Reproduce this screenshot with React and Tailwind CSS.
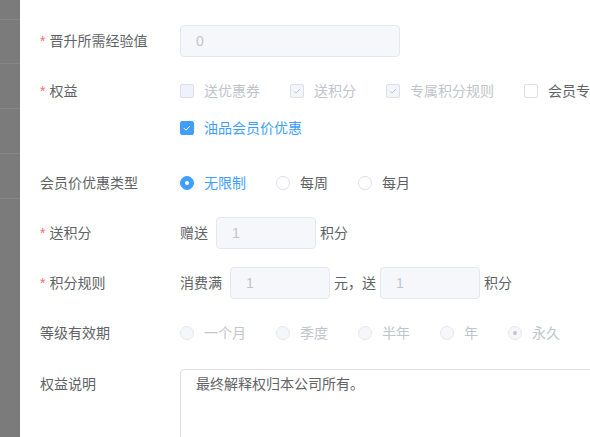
import React from "react";

const Req = () => <span className="text-[#f56c6c] mr-[4px]">*</span>;

function Label({ required, children }) {
  return (
    <div className="w-[140px] shrink-0 h-8 flex items-center text-[#606266]">
      {required && <Req />}
      {children}
    </div>
  );
}

function CheckMark({ color }) {
  return (
    <svg width="14" height="14" viewBox="0 0 14 14" className="block">
      <polyline points="4,7.2 6,9.2 10,5" fill="none" stroke={color} strokeWidth="1" />
    </svg>
  );
}

function Checkbox({ label, checked, disabled, last }) {
  let box = "bg-white border-[#dcdfe6]";
  let text = "text-[#606266]";
  if (disabled) {
    box = checked ? "bg-[#f2f6fc] border-[#dcdfe6]" : "bg-[#edf2fc] border-[#dcdfe6]";
    text = "text-[#c0c4cc]";
  } else if (checked) {
    box = "bg-[#409eff] border-[#409eff]";
    text = "text-[#409eff]";
  }
  return (
    <div className={`flex items-center whitespace-nowrap ${last ? "" : "mr-[30px]"}`}>
      <span className={`w-[14px] h-[14px] border rounded-[2px] box-border flex items-center justify-center ${box}`}>
        {checked && (
          <svg width="12" height="12" viewBox="0 0 12 12" className="block">
            <polyline points="3,6.2 5,8.2 9,4" fill="none" stroke={disabled ? "#c0c4cc" : "#ffffff"} strokeWidth="1" />
          </svg>
        )}
      </span>
      <span className={`pl-[10px] ${text}`}>{label}</span>
    </div>
  );
}

function Radio({ label, checked, disabled }) {
  let box = "bg-white border-[#dcdfe6]";
  let text = "text-[#606266]";
  let dot = null;
  if (disabled) {
    box = "bg-[#f5f7fa] border-[#e4e7ed]";
    text = "text-[#c0c4cc]";
    if (checked) dot = <span className="w-[4px] h-[4px] rounded-full bg-[#c0c4cc]" />;
  } else if (checked) {
    box = "bg-[#409eff] border-[#409eff]";
    text = "text-[#409eff]";
    dot = <span className="w-[4px] h-[4px] rounded-full bg-white" />;
  }
  return (
    <div className="flex items-center whitespace-nowrap mr-[30px]">
      <span className={`w-[14px] h-[14px] border rounded-full box-border flex items-center justify-center ${box}`}>
        {dot}
      </span>
      <span className={`pl-[10px] ${text}`}>{label}</span>
    </div>
  );
}

function DisInput({ value, w }) {
  return (
    <div className={`${w} h-8 shrink-0 bg-[#f5f7fa] border border-[#e4e7ed] rounded-[4px] px-[15px] flex items-center text-[#c0c4cc] box-border`}>
      {value}
    </div>
  );
}

export default function App() {
  return (
    <div className="w-[590px] h-[437px] overflow-hidden flex bg-white text-[14px] font-['Liberation_Sans','Noto_Sans_CJK_SC',sans-serif]">
      <div className="w-[20px] shrink-0 bg-[#7b7b7b] flex flex-col">
        <div className="h-[20px] border-b border-[#868686]" />
        <div className="h-[44px] border-b border-[#868686]" />
        <div className="h-[45px] border-b border-[#868686]" />
        <div className="h-[45px] border-b border-[#868686]" />
        <div className="h-[45px] border-b border-[#868686]" />
        <div className="flex-1" />
      </div>
      <div className="flex-1 pl-[20px] pt-[25px] flex flex-col">
        <div className="flex">
          <Label required>晋升所需经验值</Label>
          <DisInput value="0" w="w-[220px]" />
        </div>

        <div className="flex mt-[18px]">
          <Label required>权益</Label>
          <div className="flex flex-col">
            <div className="h-8 flex items-center">
              <Checkbox label="送优惠券" disabled />
              <Checkbox label="送积分" checked disabled />
              <Checkbox label="专属积分规则" checked disabled />
              <Checkbox label="会员专享价" last />
            </div>
            <div className="h-8 mt-[5px] flex items-center">
              <Checkbox label="油品会员价优惠" checked />
            </div>
          </div>
        </div>

        <div className="flex mt-[23px]">
          <Label>会员价优惠类型</Label>
          <div className="h-8 flex items-center">
            <Radio label="无限制" checked />
            <Radio label="每周" />
            <Radio label="每月" />
          </div>
        </div>

        <div className="flex mt-[18px]">
          <Label required>送积分</Label>
          <div className="h-8 flex items-center text-[#606266] whitespace-nowrap">
            <span className="mr-[8px]">赠送</span>
            <DisInput value="1" w="w-[100px]" />
            <span className="ml-[4px]">积分</span>
          </div>
        </div>

        <div className="flex mt-[18px]">
          <Label required>积分规则</Label>
          <div className="h-8 flex items-center text-[#606266] whitespace-nowrap">
            <span className="mr-[8px]">消费满</span>
            <DisInput value="1" w="w-[100px]" />
            <span className="mx-[4px]">元，送</span>
            <DisInput value="1" w="w-[100px]" />
            <span className="ml-[4px]">积分</span>
          </div>
        </div>

        <div className="flex mt-[18px]">
          <Label>等级有效期</Label>
          <div className="h-8 flex items-center">
            <Radio label="一个月" disabled />
            <Radio label="季度" disabled />
            <Radio label="半年" disabled />
            <Radio label="年" disabled />
            <Radio label="永久" checked disabled />
          </div>
        </div>

        <div className="flex mt-[19px]">
          <Label>权益说明</Label>
          <div className="w-[500px] h-[90px] shrink-0 border border-[#dcdfe6] rounded-[4px] px-[15px] pt-[4px] text-[#606266] leading-[21px] mt-[1px]">
            最终解释权归本公司所有。
          </div>
        </div>
      </div>
    </div>
  );
}
